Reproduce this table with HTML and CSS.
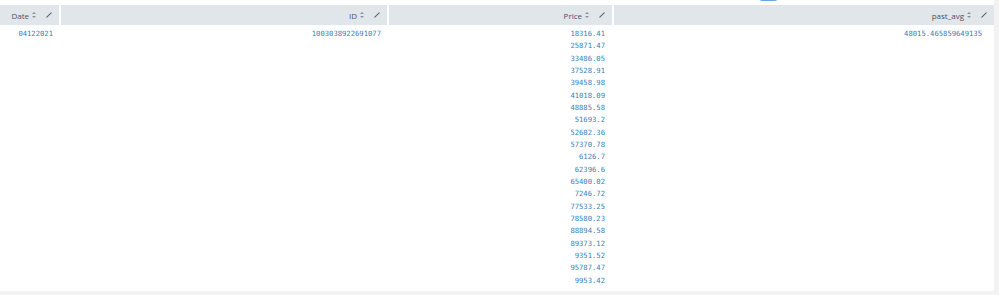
FILE: index.html
```html
<!DOCTYPE html>
<html>
<head>
<meta charset="utf-8">
<link rel="stylesheet" href="styles.css">
</head>
<body>
<div class="panel">
  <div class="top-btn"></div>
  <div class="grid head">
    <div class="th"><span>Date</span><span class="sort"></span><svg class="pen" viewBox="0 0 6 6"><path d="M0.8 5.2 L5.2 0.8" /></svg></div>
    <div class="th"><span>ID</span><span class="sort"></span><svg class="pen" viewBox="0 0 6 6"><path d="M0.8 5.2 L5.2 0.8" /></svg></div>
    <div class="th"><span>Price</span><span class="sort"></span><svg class="pen" viewBox="0 0 6 6"><path d="M0.8 5.2 L5.2 0.8" /></svg></div>
    <div class="th"><span>past_avg</span><span class="sort"></span><svg class="pen" viewBox="0 0 6 6"><path d="M0.8 5.2 L5.2 0.8" /></svg></div>
  </div>
  <div class="grid body">
    <div class="td c1">04122021</div>
    <div class="td c2">1003038922691077</div>
    <div class="td c3">18316.41<br>25871.47<br>33486.05<br>37528.91<br>39458.98<br>41018.09<br>48885.58<br>51693.2<br>52602.36<br>57370.78<br>6126.7<br>62396.6<br>65400.02<br>7246.72<br>77533.25<br>78580.23<br>88894.58<br>89373.12<br>9351.52<br>95787.47<br>9953.42</div>
    <div class="td c4">48015.465859649135</div>
  </div>
</div>
</body>
</html>
```
FILE: styles.css
```css
html, body {
  margin: 0;
  padding: 0;
  background: #f2f2f2;
}
.panel {
  position: relative;
  width: 994px;
  height: 291px;
  background: #ffffff;
  padding-top: 5px;
  box-sizing: border-box;
}
.top-btn {
  position: absolute;
  left: 759px;
  top: -12px;
  width: 19px;
  height: 13px;
  box-sizing: border-box;
  border: 1px solid #6aa5d8;
  background: #dbeaf7;
  border-radius: 3px;
}
.grid {
  display: grid;
  grid-template-columns: 59px 326px 223px 380px;
  column-gap: 2px;
}
.head .th {
  background: #e1e6eb;
  height: 20px;
  display: flex;
  align-items: center;
  justify-content: flex-end;
  padding-right: 7px;
  font-family: "Open Sans", "Liberation Sans", sans-serif;
  font-size: 8px;
  color: #4a535c;
}
.sort {
  position: relative;
  width: 4px;
  height: 6px;
  margin-left: 3px;
}
.sort::before, .sort::after {
  content: "";
  position: absolute;
  left: 0;
  border-left: 2px solid transparent;
  border-right: 2px solid transparent;
}
.sort::before {
  top: 0;
  border-bottom: 2px solid #8a949e;
}
.sort::after {
  bottom: 0;
  border-top: 2px solid #8a949e;
}
.pen {
  width: 6px;
  height: 6px;
  margin-left: 10px;
  stroke: #5c6670;
  stroke-width: 1.1;
  stroke-linecap: round;
}
.body {
  padding-top: 3px;
}
.td {
  text-align: right;
  font-family: "DejaVu Sans Mono", "Liberation Mono", monospace;
  font-size: 7.2px;
  line-height: 12.33px;
  color: #3a80bd;
}
.c1 { padding-right: 6px; }
.c2 { padding-right: 6px; }
.c3 { padding-right: 7px; }
.c4 { padding-right: 12px; }
```
